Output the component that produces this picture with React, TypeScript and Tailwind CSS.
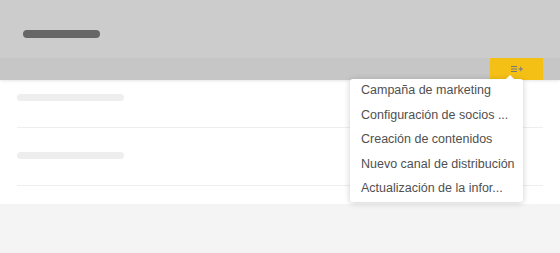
import React from "react";

const items = [
  "Campaña de marketing",
  "Configuración de socios ...",
  "Creación de contenidos",
  "Nuevo canal de distribución",
  "Actualización de la infor...",
];

export default function App() {
  return (
    <div className="relative w-[560px] h-[253px] bg-[#f4f4f4] overflow-hidden" style={{ fontFamily: '"Liberation Sans", Arial, sans-serif' }}>
      <div className="relative z-10 shadow-[0_1px_3px_rgba(0,0,0,0.1)]">
        <div className="h-[58px] bg-[#cccccc] pl-[23px] pt-[30px]">
          <div className="w-[77px] h-[8px] rounded-full bg-[#666666]" />
        </div>
        <div className="h-[22px] bg-[#c6c6c6] flex justify-end pr-[17px]">
          <div className="w-[53px] h-full bg-[#f5c016] flex items-center justify-center">
            <svg width="12" height="8" viewBox="0 0 12 8" fill="none" stroke="#777777" strokeWidth="1">
              <path d="M0 1.5H6M0 4H6M0 6.5H6" />
              <path d="M7.5 4H12M9.75 1.75V6.25" />
            </svg>
          </div>
        </div>
      </div>
      <div className="bg-white px-[17px]">
        <div className="h-[48px] pt-[14px] border-b border-[#eeeeee]">
          <div className="w-[107px] h-[7px] rounded-full bg-[#eeeeee]" />
        </div>
        <div className="h-[58px] pt-[24px] border-b border-[#eeeeee]">
          <div className="w-[107px] h-[7px] rounded-full bg-[#eeeeee]" />
        </div>
        <div className="h-[18px]" />
      </div>

      <div className="absolute z-20 left-[350px] top-[79px] w-[173px] bg-white rounded-[3px] shadow-[0_1px_6px_rgba(0,0,0,0.2)]">
        <div className="absolute -top-[4px] left-[156px] w-0 h-0 border-l-[4px] border-r-[4px] border-b-[4px] border-l-transparent border-r-transparent border-b-white" />
        {items.map((t) => (
          <div key={t} className="h-[24.5px] pl-[11px] pb-[1px] flex items-center text-[12.5px] text-[#505050] whitespace-nowrap">
            {t}
          </div>
        ))}
      </div>
    </div>
  );
}
